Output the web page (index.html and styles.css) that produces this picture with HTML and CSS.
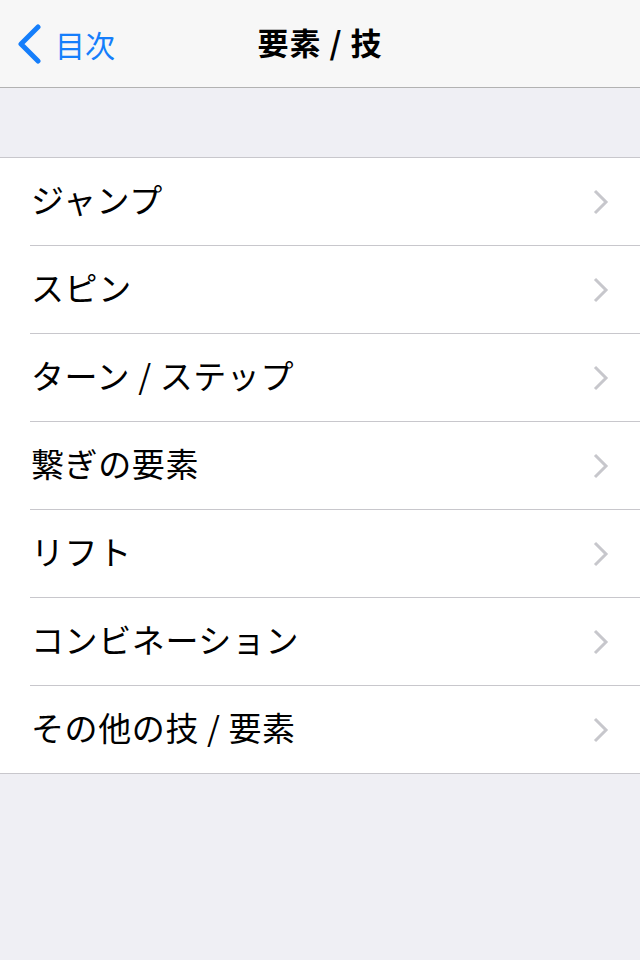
FILE: index.html
```html
<!DOCTYPE html>
<html>
    <head>
        <title>要素 / 技</title>
        <meta http-equiv="Content-Type" content="text/html; charset=UTF-8">
        <link rel="stylesheet" href="styles.css">
    </head>
    <body>
        <div class="nav-bar">
            <a class="back-button">
                <svg class="back-chevron" width="26" height="40" viewBox="0 0 26 40">
                    <path d="M22 3 L5 20 L22 37" fill="none" stroke="#157efb" stroke-width="5" stroke-linecap="round" stroke-linejoin="round"/>
                </svg>
                <span>目次</span>
            </a>
            <div class="nav-title">要素 / 技</div>
        </div>

        <ul class="table-group">
            <li class="cell"><span>ジャンプ</span><svg class="chevron" width="16" height="26" viewBox="0 0 16 26"><path d="M2 2 L13 13 L2 24" fill="none" stroke="#c7c7cc" stroke-width="3"/></svg></li>
            <li class="cell"><span>スピン</span><svg class="chevron" width="16" height="26" viewBox="0 0 16 26"><path d="M2 2 L13 13 L2 24" fill="none" stroke="#c7c7cc" stroke-width="3"/></svg></li>
            <li class="cell"><span>ターン / ステップ</span><svg class="chevron" width="16" height="26" viewBox="0 0 16 26"><path d="M2 2 L13 13 L2 24" fill="none" stroke="#c7c7cc" stroke-width="3"/></svg></li>
            <li class="cell"><span>繋ぎの要素</span><svg class="chevron" width="16" height="26" viewBox="0 0 16 26"><path d="M2 2 L13 13 L2 24" fill="none" stroke="#c7c7cc" stroke-width="3"/></svg></li>
            <li class="cell"><span>リフト</span><svg class="chevron" width="16" height="26" viewBox="0 0 16 26"><path d="M2 2 L13 13 L2 24" fill="none" stroke="#c7c7cc" stroke-width="3"/></svg></li>
            <li class="cell"><span>コンビネーション</span><svg class="chevron" width="16" height="26" viewBox="0 0 16 26"><path d="M2 2 L13 13 L2 24" fill="none" stroke="#c7c7cc" stroke-width="3"/></svg></li>
            <li class="cell"><span>その他の技 / 要素</span><svg class="chevron" width="16" height="26" viewBox="0 0 16 26"><path d="M2 2 L13 13 L2 24" fill="none" stroke="#c7c7cc" stroke-width="3"/></svg></li>
        </ul>
    </body>
</html>
```

FILE: styles.css
```css
body {
    padding: 0;
    margin: 0;
    min-height: 960px;
    background-color: #efeff4;
    font-family: "Noto Sans CJK JP", "Noto Sans", sans-serif;
    color: #000;
}

.nav-bar {
    position: relative;
    height: 88px;
    box-sizing: border-box;
    display: flex;
    align-items: center;
    justify-content: center;
    padding-bottom: 5px;
    background-color: #f7f7f7;
    border-bottom: 1px solid #b2b2b2;
}

.back-button {
    position: absolute;
    left: 16px;
    top: 24px;
    display: flex;
    align-items: center;
    color: #157efb;
    font-size: 30px;
    height: 40px;
}

.back-chevron {
    display: block;
    margin-right: 13px;
}

.nav-title {
    font-size: 31px;
    font-weight: bold;
    letter-spacing: 1px;
}

.table-group {
    list-style: none;
    margin: 69px 0 0;
    padding: 0 0 0 30px;
    background-color: #fff;
    border-top: 1px solid #c8c7cc;
    border-bottom: 1px solid #c8c7cc;
}

.cell {
    height: 88px;
    box-sizing: border-box;
    display: flex;
    align-items: center;
    justify-content: space-between;
    padding: 0 30px 5px 1px;
    font-size: 33px;
    letter-spacing: 0.6px;
    border-bottom: 1px solid #c8c7cc;
}

.cell:last-child {
    border-bottom: none;
    height: 87px;
}

.chevron {
    display: block;
    margin-top: 5px;
    margin-right: 1px;
}
```
